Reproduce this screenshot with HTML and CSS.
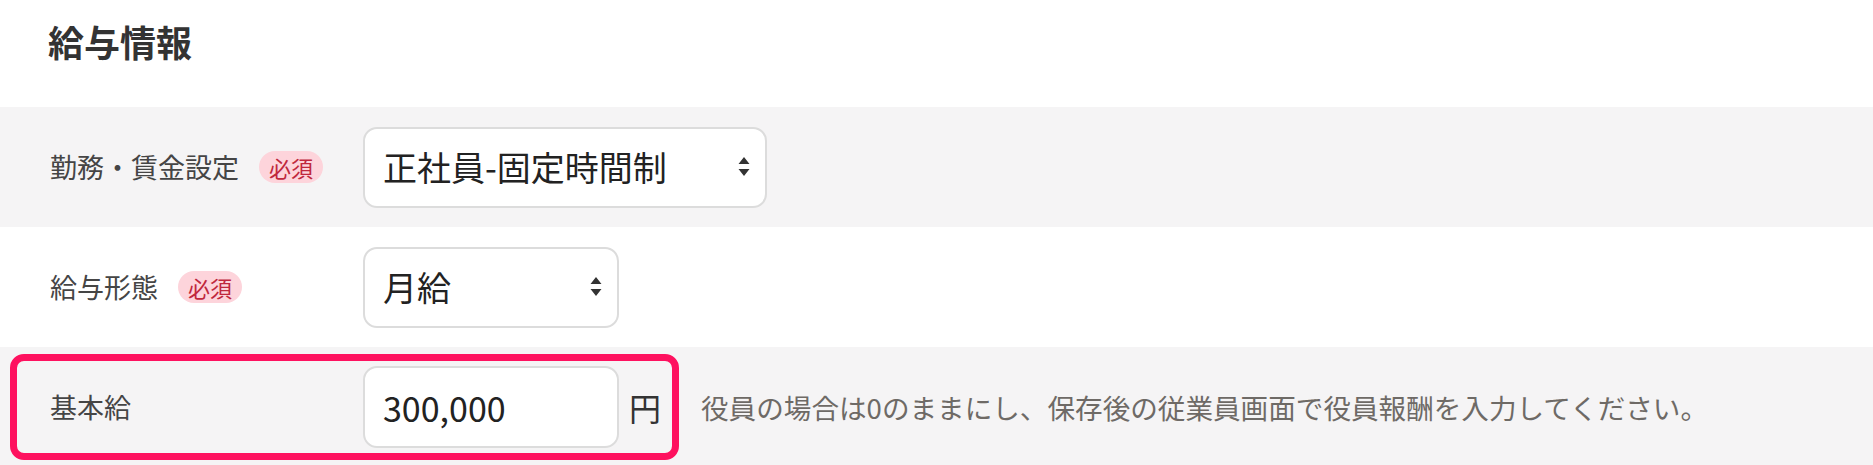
FILE: index.html
```html
<!DOCTYPE html>
<html lang="ja">
<head>
<meta charset="utf-8">
<title>給与情報</title>
<link rel="stylesheet" href="styles.css">
</head>
<body>
<section class="section">
  <h2 class="title">給与情報</h2>
  <div class="row row-gray">
    <div class="label-cell"><span class="label">勤務・賃金設定</span><span class="badge">必須</span></div>
    <div class="select select-wide">
      <span class="select-text">正社員-固定時間制</span>
      <svg class="arrows" width="12" height="22" viewBox="0 0 12 22"><path d="M6 1 L11.5 8 L0.5 8 Z M0.5 13 L11.5 13 L6 20 Z" fill="#333"/></svg>
    </div>
  </div>
  <div class="row row-white">
    <div class="label-cell"><span class="label">給与形態</span><span class="badge">必須</span></div>
    <div class="select select-narrow">
      <span class="select-text">月給</span>
      <svg class="arrows" width="12" height="22" viewBox="0 0 12 22"><path d="M6 1 L11.5 8 L0.5 8 Z M0.5 13 L11.5 13 L6 20 Z" fill="#333"/></svg>
    </div>
  </div>
  <div class="row row-gray row-highlight">
    <div class="label-cell"><span class="label">基本給</span></div>
    <div class="input-group">
      <input class="text-input" type="text" value="300,000">
      <span class="unit">円</span>
      <span class="help">役員の場合は0のままにし、保存後の従業員画面で役員報酬を入力してください。</span>
    </div>
    <div class="highlight"></div>
  </div>
</section>
</body>
</html>
```

FILE: styles.css
```css
html, body {
  margin: 0;
  padding: 0;
  background: #ffffff;
}

body {
  font-family: "Noto Sans CJK JP", "Noto Sans", sans-serif;
  color: #333333;
  overflow: hidden;
}

.section {
  width: 100%;
}

.title {
  margin: 0;
  box-sizing: border-box;
  height: 107px;
  padding: 17px 0 0 48px;
  font-size: 36px;
  line-height: 48px;
  font-weight: 700;
  color: #333333;
}

.row {
  display: grid;
  grid-template-columns: 313px auto;
  align-items: center;
  justify-content: start;
  box-sizing: border-box;
  height: 120px;
  padding-left: 50px;
}

.row-gray {
  background: #f5f4f5;
}

.row-white {
  background: #ffffff;
}

.row-highlight {
  position: relative;
}

.label-cell {
  display: flex;
  align-items: center;
}

.label {
  font-size: 27px;
  line-height: 40px;
  color: #454545;
}

.badge {
  margin-left: 20px;
  height: 32px;
  line-height: 32px;
  padding: 0 10px;
  border-radius: 16px;
  background: #fdd4db;
  color: #c0283d;
  font-size: 22px;
}

.select {
  box-sizing: border-box;
  height: 81px;
  display: flex;
  align-items: center;
  padding: 0 15px 0 18px;
  background: #ffffff;
  border: 2px solid #dcdcdc;
  border-radius: 14px;
}

.select-wide {
  width: 404px;
}

.select-narrow {
  width: 256px;
}

.select-text {
  font-size: 34px;
  color: #222222;
  line-height: 46px;
}

.arrows {
  margin-left: auto;
  display: block;
}

.input-group {
  display: flex;
  align-items: center;
}

.text-input {
  box-sizing: border-box;
  width: 256px;
  height: 82px;
  padding: 0 0 0 18px;
  border: 2px solid #dcdcdc;
  border-radius: 14px;
  background: #ffffff;
  font-family: "Noto Sans CJK JP", "Noto Sans", sans-serif;
  font-size: 34px;
  color: #222222;
  outline: none;
}

.unit {
  margin-left: 10px;
  font-size: 32px;
  color: #333333;
}

.help {
  margin-left: 40px;
  font-size: 27.6px;
  color: #6e6a66;
  white-space: nowrap;
}

.highlight {
  position: absolute;
  left: 10px;
  top: 7px;
  width: 669px;
  height: 106px;
  box-sizing: border-box;
  border: 7px solid #fe115f;
  border-radius: 14px;
  pointer-events: none;
}
```
